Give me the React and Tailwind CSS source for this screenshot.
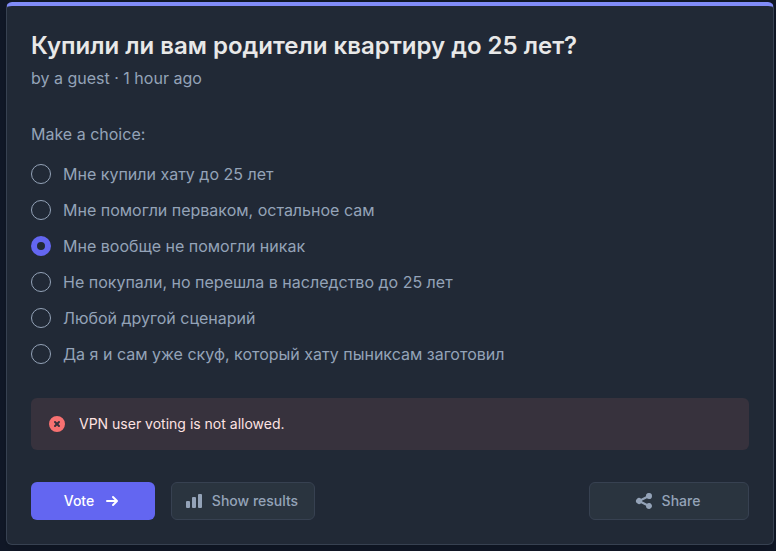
import { useState } from 'react'
import { HiArrowSmRight, HiChartBar, HiShare, HiXCircle } from 'react-icons/hi'

const OPTIONS = [
  { id: 1, label: 'Мне купили хату до 25 лет' },
  { id: 2, label: 'Мне помогли перваком, остальное сам' },
  { id: 3, label: 'Мне вообще не помогли никак' },
  { id: 4, label: 'Не покупали, но перешла в наследство до 25 лет' },
  { id: 5, label: 'Любой другой сценарий' },
  { id: 6, label: 'Да я и сам уже скуф, который хату пыниксам заготовил' },
]

function PollOption({ option, checked, onChange }) {
  const id = `option-${option.id}`
  return (
    <div className="flex items-center">
      <input
        id={id}
        type="radio"
        name="choice"
        checked={checked}
        onChange={() => onChange(option.id)}
        className="size-5 shrink-0 appearance-none rounded-full border border-[#94a3b8] checked:border-[6px] checked:border-[#6366f1]"
      />
      <label htmlFor={id} className="pl-3">{option.label}</label>
    </div>
  )
}

function SecondaryButton({ icon: Icon, className, children }) {
  return (
    <button
      type="button"
      className={`flex items-center justify-center rounded-md border border-[#374151] bg-[#2a343f] py-2 text-sm font-medium ${className}`}
    >
      <Icon className="mr-2 -ml-1 size-5" />
      {children}
    </button>
  )
}

export default function App() {
  const [selected, setSelected] = useState(3)

  return (
    <div className="min-h-screen bg-[#111827] pt-0.5 pr-0.5 pb-1.5 pl-1.5 font-[Inter,sans-serif] text-base text-[#94a3b8]">
      <main className="rounded-md border border-t-4 border-[#374151] border-t-[#818cf8] bg-[#212936] p-6 shadow-lg">
        {/* Heading */}
        <h1 className="text-2xl font-semibold text-[#e8e8e8]">
          Купили ли вам родители квартиру до 25 лет?
        </h1>
        <p className="mt-1">by a guest · 1 hour ago</p>

        {/* Choices */}
        <form onSubmit={e => e.preventDefault()}>
          <fieldset className="mt-8">
            <legend>Make a choice:</legend>
            <div className="mt-4 flex flex-col gap-3">
              {OPTIONS.map(option => (
                <PollOption
                  key={option.id}
                  option={option}
                  checked={selected === option.id}
                  onChange={setSelected}
                />
              ))}
            </div>
          </fieldset>

          {/* Error */}
          <div role="alert" className="mt-8 flex items-center gap-3 rounded-md bg-[#37323d] p-4 text-sm text-[#fee2e2]">
            <HiXCircle className="size-5 shrink-0 text-[#f87171]" />
            <p>VPN user voting is not allowed.</p>
          </div>

          {/* Actions */}
          <div className="mt-8 flex gap-4">
            <button
              type="submit"
              className="flex w-[124px] items-center justify-center gap-2 rounded-md bg-[#6366f1] py-2 text-sm font-medium text-white"
            >
              Vote
              <HiArrowSmRight className="size-5" />
            </button>
            <SecondaryButton icon={HiChartBar} className="w-36">Show results</SecondaryButton>
            <SecondaryButton icon={HiShare} className="ml-auto w-40">Share</SecondaryButton>
          </div>
        </form>
      </main>
    </div>
  )
}
